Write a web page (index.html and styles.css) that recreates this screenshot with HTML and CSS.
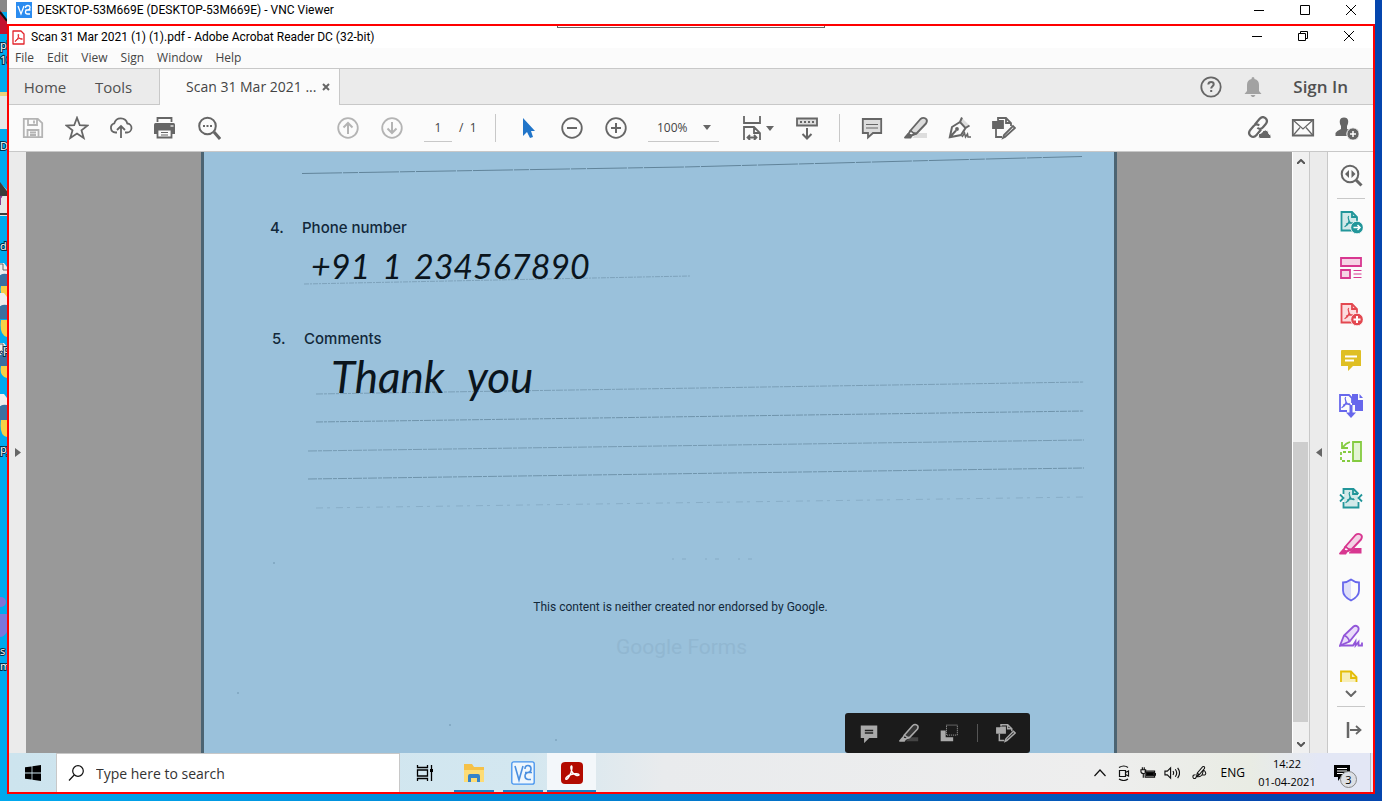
FILE: index.html
```html
<!DOCTYPE html>
<html lang="en">
<head>
<meta charset="utf-8">
<title>VNC Viewer - Acrobat Reader</title>
<link rel="stylesheet" href="styles.css">
</head>
<body>
<svg class="defs" width="0" height="0" aria-hidden="true">
  <defs>
    <g id="pdfmark" fill="none" stroke-width="1.3" stroke-linecap="round"><path d="M9.500 6.500c-1 .5.300 3 .5 4.500.5 1.500 2 2.500 4 2.500M10 11.500c-.5 2-2 4-4 5M7.500 14q2.500-1.700 6-1"/></g>
    <g id="edit-pdf" fill="none" stroke-width="1.800"><path d="M6 4V2h8l5 5v3M14 2v5h5M4 13v8h6"/><path d="M3 6h2l1-1h5v7H1V6z" class="solid"/><path d="M13 21l-2 1 1-3 9-9 2 2z"/></g>
    <g id="pen-hl" stroke-width="1.900" stroke-linejoin="round"><path d="M6.500 14.500L16.500 3q2.500-2 5-.5t.5 5L12.500 17.500q-3 .5-6-3z" class="body"/><path d="M6.500 14.500l-2 3.500 3 1.500 5-2" fill="none"/><path d="M1 21.500l3-3.500 3.500 1.500-1 2z" class="solid"/></g>
  </defs>
</svg>
<div class="desktop">
  <svg class="desk-icons" width="7" height="801" viewBox="0 0 7 801" aria-hidden="true">
    <path d="M0 0h7v12H0z" fill="#888"/><path d="M0 10l7 10v14H0z" fill="#c4122f"/><path d="M0 12l7 9" stroke="#111" stroke-width="2"/>
    <path d="M0 93h7v36H0z" fill="#e5e7e9"/><path d="M0 92h7v4H0z" fill="#ead27c"/>
    <path d="M0 183l7 7v26H0z" fill="#e6e6e6"/><path d="M0 182l7 9v5H0zM0 213h7v2H0z" fill="#3b3b3b"/><path d="M2 197q-2-1-2 2v6" stroke="#86408f" stroke-width="2" fill="none"/>
    <path d="M0 263h4l3 4v8H0z" fill="#eee"/><path d="M0 264h3v6h4" stroke="#666" fill="none"/><path d="M7 274q-7-1-7 3v9h7z" fill="#3b70a0"/><path d="M7 286H1q-2 10 6 12z" fill="#f6cf45"/>
    <path d="M0 343h4l3 4v8H0z" fill="#eee"/><path d="M0 344h3v6h4" stroke="#666" fill="none"/><path d="M7 354q-7-1-7 3v9h7z" fill="#3b70a0"/><path d="M7 366H1q-2 10 6 12z" fill="#f6cf45"/>
    <path d="M0 293h4l3 4v9H0z" fill="#eee"/><path d="M7 305q-7-1-7 3v11h7z" fill="#3b70a0"/><path d="M7 320H1q-2 15 6 17z" fill="#f6cf45"/>
    <path d="M0 394h4l3 4v8H0z" fill="#eee"/><path d="M7 405q-7-1-7 3v12h7z" fill="#3b70a0"/><path d="M7 420H1q-2 16 6 17z" fill="#f6cf45"/>
    <circle cx="1" cy="602" r="5" fill="#7d74d6"/><path d="M0 614h7v18q-3 5-7 5z" fill="#7a77dc"/>
    <g class="desk-label"><text x="0" y="49">pl</text><text x="0" y="64">10</text><text x="0" y="150">D</text><text x="0" y="250">di</text><text x="0" y="353">.p</text><text x="0" y="453">py</text><text x="0" y="655">s</text><text x="0" y="670">m</text></g>
  </svg>
  <div class="vnc">
    <header class="vnc-title">
      <svg class="app16" viewBox="0 0 16 16"><path d="M0 0h16v16H0z" fill="#2b8cf0"/><path d="M2 4l3 8 3-8M9.500 6q0-2.500 2.300-2.500T14 5.600 11.800 8H9.500M14.500 8h-3q-2 0-2 2t2 2h2.500" fill="none" stroke="#fff" stroke-width="1.300"/></svg>
      <h1>DESKTOP-53M669E (DESKTOP-53M669E) - VNC Viewer</h1>
      <div class="winbtns">
        <button aria-label="Minimize"><svg viewBox="0 0 10 10"><path d="M0 5.500h10"/></svg></button>
        <button aria-label="Maximize"><svg viewBox="0 0 10 10"><path d="M.5.5h9v9h-9z"/></svg></button>
        <button aria-label="Close"><svg viewBox="0 0 10 10"><path d="M0 0l10 10M10 0L0 10"/></svg></button>
      </div>
    </header>
    <main class="remote">
      <div class="vnc-handle"></div>
      <header class="app-title">
        <svg class="app-pdf" viewBox="0 0 13 15"><path d="M1 1h8l3 3v10H1z" fill="#fff" stroke="#e3242b" stroke-width="1.300" stroke-linejoin="round"/><path d="M6.400 4.200c-.9.300.1 3 .7 3.800 1 1.100 2.800 1.700 3.300 1.100.3-.8-2.800-.8-4.500-.2-2 .7-3.200 2.200-2.700 2.600.8.300 2.200-2.200 2.900-4 .4-1.200.9-3 .3-3.300z" fill="none" stroke="#e3242b"/></svg>
        <h2>Scan 31 Mar 2021 (1) (1).pdf - Adobe Acrobat Reader DC (32-bit)</h2>
        <div class="winbtns inner">
          <button aria-label="Minimize"><svg viewBox="0 0 10 10"><path d="M0 5.500h10"/></svg></button>
          <button aria-label="Restore"><svg viewBox="0 0 10 10"><path d="M.5 2.500h7v7h-7zM2.500 2V.5h7v7H8"/></svg></button>
          <button aria-label="Close"><svg viewBox="0 0 10 10"><path d="M0 0l10 10M10 0L0 10"/></svg></button>
        </div>
      </header>
      <nav class="menu"><button>File</button><button>Edit</button><button>View</button><button>Sign</button><button>Window</button><button>Help</button></nav>
      <div class="tabs">
        <button class="tab home">Home</button><button class="tab tools">Tools</button>
        <div class="tab active"><span>Scan 31 Mar 2021 ...</span><button aria-label="Close tab"><svg viewBox="0 0 8 8"><path d="M1 1l6 6M7 1L1 7" stroke="#666" stroke-width="2"/></svg></button></div>
        <div class="account">
          <button class="ic" aria-label="Help"><svg viewBox="0 0 24 24"><circle cx="12" cy="12" r="9.700"/><path d="M9.300 9.500q.2-2.500 2.800-2.500t2.600 2.200c0 2-2.500 2-2.500 4.300M12.200 15v2" stroke-width="2"/></svg></button>
          <button class="ic" aria-label="Notifications"><svg viewBox="0 0 24 24"><path fill="#a2a2a2" stroke="none" d="M12 2q1.500 0 1.500 2 4.500 1 4.500 6v6l2.500 3h-17L6 16v-6q0-5 4.500-6Q10.500 2 12 2zM9.500 20h5l-1.500 2h-2z"/></svg></button>
          <button class="signin">Sign In</button>
        </div>
      </div>
      <div class="toolbar">
        <div class="group">
          <button class="ic dim" aria-label="Save"><svg viewBox="0 0 24 24"><path d="M2.800 2.800h14l4.400 4.400v14H2.800zM7 3v6h9V3M6.500 21v-7h11v7M13 4.500v3M9 16.500h6M9 19h6"/></svg></button>
          <button class="ic" aria-label="Star"><svg viewBox="0 0 24 24"><path d="M12 1.800l2.800 7.400 7.900.3-6.200 4.900 2.200 7.600-6.700-4.400L5.300 22l2.200-7.600L1.300 9.500l7.900-.3z"/></svg></button>
          <button class="ic" aria-label="Upload"><svg viewBox="0 0 24 24"><path d="M8 16.500H6.500A4.700 4.700 0 0 1 5.300 7.300 6.700 6.700 0 0 1 18.300 7.500a4.500 4.500 0 0 1-.6 9H16M12 22V10.500M8 14l4-4 4 4"/></svg></button>
          <button class="ic" aria-label="Print"><svg viewBox="0 0 24 24"><path d="M4.500 6V2h14v4"/><path d="M2.500 7h18q1.500 0 1.500 1.500V18H1V8.500Q1 7 2.500 7z" fill="#666" stroke="none"/><path d="M4.500 13.500h14v8h-14z" fill="#fbfbfb"/><path d="M8 16.500h7M8 19h7" stroke-width="1.200"/><path d="M17.500 10h3" stroke="#fff" stroke-width="1.200"/></svg></button>
          <button class="ic" aria-label="Find"><svg viewBox="0 0 24 24"><circle cx="10.500" cy="10" r="8.300" stroke-width="2"/><path d="M17 16l6 7" stroke-width="3"/><path d="M6 10h2M9.500 10h2M13 10h2" stroke-width="2"/></svg></button>
        </div>
        <div class="group center">
          <button class="ic dim" aria-label="Previous page"><svg viewBox="0 0 24 24"><circle cx="12" cy="12" r="9.800"/><path d="M12 18V7M7.500 11.500L12 7l4.500 4.500" stroke-width="2"/></svg></button>
          <button class="ic dim" aria-label="Next page"><svg viewBox="0 0 24 24"><circle cx="12" cy="12" r="9.800"/><path d="M12 6v11M7.500 12.500L12 17l4.500-4.500" stroke-width="2"/></svg></button>
          <label class="pager"><input value="1" aria-label="Page"><span>/&nbsp; 1</span></label>
          <i class="vsep"></i>
          <button class="ic" aria-label="Select"><svg viewBox="0 0 24 24"><path d="M7 2v18l4-4 3 6 3-1-2-6h4z" fill="#2175c9" stroke="none"/></svg></button>
          <button class="ic" aria-label="Zoom out"><svg viewBox="0 0 24 24"><circle cx="12" cy="12" r="9.800"/><path d="M7 12h10" stroke-width="2"/></svg></button>
          <button class="ic" aria-label="Zoom in"><svg viewBox="0 0 24 24"><circle cx="12" cy="12" r="9.800"/><path d="M7 12h10M12 7v10" stroke-width="2"/></svg></button>
          <div class="zoom"><select aria-label="Zoom level"><option>100%</option></select><svg class="caret" viewBox="0 0 8 5"><path d="M0 0h8L4 5z"/></svg></div>
          <button class="ic fit" aria-label="Fit width"><svg viewBox="0 0 24 24"><path d="M3 0v7h16V0M3 24V11h10l6 6v7M13 11v6h6M6.500 21.500h9M9 19l-2.500 2.500L9 24M13 19l2.500 2.500L13 24"/></svg><svg class="caret" viewBox="0 0 8 5"><path d="M0 0h8L4 5z"/></svg></button>
          <button class="ic" aria-label="Scroll mode"><svg viewBox="0 0 24 24"><path d="M2 2.500h20v7H2z" fill="#ddd"/><path d="M5 6h14" stroke-dasharray="2 2" stroke-width="2"/><path d="M12 12v10M7.500 18l4.500 4.500 4.500-4.500" stroke-width="2"/></svg></button>
          <i class="vsep"></i>
          <button class="ic" aria-label="Comment"><svg viewBox="0 0 24 24"><path d="M2.800 3h18.400v14H13l-5 4.500V17H2.800z" fill="#ddd"/><path d="M6 8.500h12M6 12h12" stroke-width="1.200"/></svg></button>
          <button class="ic" aria-label="Highlight"><svg viewBox="0 0 24 24"><path d="M8 22l6-5h9v5z" fill="#ddd" stroke="none"/><use href="#pen-hl"/></svg></button>
          <button class="ic" aria-label="Sign document"><svg viewBox="0 0 24 24"><path d="M14 2l7 7-3 3-6-6z" fill="#ddd" stroke="none"/><path d="M1.800 21.200L4 11l8-5 5.500 6-4.500 7zM2 21l6-6.500M12 6l2-4.500M17.500 12l4-2.500" stroke-width="2"/><circle cx="9" cy="13" r="1"/><path d="M14 21l2.500-4 1 4 2-3 .5 3h3" stroke-width="1.500"/></svg></button>
          <button class="ic" aria-label="Edit PDF"><svg viewBox="0 0 24 24"><use href="#edit-pdf"/></svg></button>
        </div>
        <div class="group right">
          <button class="ic" aria-label="Share link"><svg viewBox="0 0 24 24"><g transform="rotate(-50 11 11)" stroke-width="2.200"><path d="M11 15H4q-4.500 0-4.500-4T4 7h5q4 0 4 4"/><path d="M11 7h7q4.500 0 4.500 4T18 15h-4q-4 0-4-4"/></g><path fill="#666" d="M13 22.500q-2.500-1-1.500-4 1-1.500 3-1.500 1-3 4-3t3.500 4q3 .5 2 4.500z" stroke="#fbfbfb" stroke-width="1"/></svg></button>
          <button class="ic" aria-label="Email"><svg viewBox="0 0 24 24"><path d="M1.800 4h20.400v15.500H1.800z"/><path d="M2 4l10 9 10-9M2 19.500l7-8M22 19.500l-7-8" stroke-width="1.200"/></svg></button>
          <button class="ic" aria-label="Share with people"><svg viewBox="0 0 24 24"><path fill="#666" d="M9 1.500c5 0 5 5 3 8.500v3l5 2v5H.5v-3q1-2 5.500-4v-3C4 6.500 4 1.500 9 1.500z" stroke="none"/><circle cx="18" cy="18" r="6.200" fill="#666" stroke="#fbfbfb" stroke-width="1"/><path d="M15 18h6M18 15v6" stroke="#fff" stroke-width="1.500"/></svg></button>
        </div>
      </div>
      <section class="work">
        <button class="pane-toggle" aria-label="Open navigation pane"><svg viewBox="0 0 6 9"><path d="M0 0v9l6-4.500z"/></svg></button>
        <div class="doc">
          <article class="paper">
            <svg class="rules" viewBox="0 0 910 601" preserveAspectRatio="none" aria-hidden="true">
              <g fill="none" stroke="#52748a" stroke-width="1">
                <path d="M98 21.500L480 15 878 4.500" opacity=".8" stroke-dasharray="40 1 15 1"/>
                <path d="M100 132l386-8" stroke-dasharray="5 1 2 1" opacity=".4"/>
                <path d="M112 242l768-12" stroke-dasharray="7 1 3 1" opacity=".45"/>
                <path d="M112 270l768-11" stroke-dasharray="7 1 3 1" opacity=".6"/>
                <path d="M104 299l776-11" stroke-dasharray="9 1 4 1" opacity=".5"/>
                <path d="M104 327l776-11" stroke-dasharray="9 1 4 1" opacity=".6"/>
                <path d="M112 356l768-11" stroke-dasharray="7 4 3 6" opacity=".25"/>
                <path d="M468 407h86" stroke-dasharray="2 8 4 19" opacity=".25"/>
              </g>
              <g fill="#6b91ab" opacity=".6"><circle cx="34" cy="541" r="1"/><circle cx="70" cy="411" r="1"/><circle cx="352" cy="588" r="1"/><circle cx="246" cy="573" r="1"/></g>
            </svg>
            <div class="question phone"><span class="num">4.</span><h3>Phone number</h3><p class="hand"><span>+91</span><span>1</span><span>234567890</span></p></div>
            <div class="question comments"><span class="num">5.</span><h3>Comments</h3><p class="hand"><span>Thank</span><span>you</span></p></div>
            <footer><p>This content is neither created nor endorsed by Google.</p><p class="forms">Google Forms</p></footer>
          </article>
          <div class="float">
            <button class="ic" aria-label="Add comment"><svg viewBox="0 0 24 24"><path d="M3 4h18v13h-9l-5 5v-5H3z" fill="#aaa"/><path d="M7 9h10M7 12h10" stroke="#222"/></svg></button>
            <button class="ic" aria-label="Highlight text"><svg viewBox="0 0 24 24"><path d="M8 22l6-5h9v5z" fill="#444" stroke="none"/><use href="#pen-hl"/></svg></button>
            <button class="ic" aria-label="Crop"><svg viewBox="0 0 24 24"><path d="M2 9h6v8h9v5H2z" fill="#aaa" stroke="none"/><path d="M9 2.500h13v12H9z" stroke-dasharray="1.200 1.200" stroke-width="1.200"/></svg></button>
            <i class="vsep"></i>
            <button class="ic" aria-label="Edit"><svg viewBox="0 0 24 24"><use href="#edit-pdf"/></svg></button>
          </div>
        </div>
        <div class="scroll"><svg viewBox="0 0 8 5"><path d="M0 5l4-4 4 4"/></svg><div class="track"><div class="thumb"></div></div><svg viewBox="0 0 8 5"><path d="M0 0l4 4 4-4"/></svg></div>
        <button class="pane-toggle end" aria-label="Collapse tools"><svg viewBox="0 0 6 9"><path d="M6 0v9L0 4.500z"/></svg></button>
        <aside class="rail">
          <button class="ic" aria-label="Search tools"><svg viewBox="0 0 24 24"><circle cx="11" cy="11" r="8.300" stroke-width="2"/><path d="M17 17l5.500 5.500" stroke-width="3"/><path class="solid" d="M10 7v8l-4-4zM12.500 7v8l4-4z" stroke="none"/></svg></button>
          <hr>
          <div class="tools-list">
            <button class="ic teal" aria-label="Export PDF"><svg viewBox="0 0 24 24"><path d="M2.500 2H13l5 5v13.500H2.500z" fill="#d2e9e9"/><path d="M13 2v5h5"/><use href="#pdfmark"/><circle cx="18" cy="17.500" r="6.300" fill="#22969a" stroke="#fbfbfb" stroke-width=".8"/><path d="M14.500 17.500H21M18.500 15l2.500 2.500-2.500 2.500" stroke="#fff" stroke-width="1.500"/></svg></button>
            <button class="ic pink" aria-label="Organize pages"><svg viewBox="0 0 24 24"><path d="M2 2h20v8H2zM2 14h9v8H2z" fill="#f6d3e5"/><path d="M14.500 14.500h8M14.500 18h8M14.500 21.500h8" stroke-width="1"/></svg></button>
            <button class="ic red" aria-label="Create PDF"><svg viewBox="0 0 24 24"><path d="M2.500 2H13l5 5v13.500H2.500z" fill="#fbdcde"/><path d="M13 2v5h5"/><use href="#pdfmark"/><circle cx="18" cy="17.500" r="6.300" fill="#e34850" stroke="#fbfbfb" stroke-width=".8"/><path d="M14.500 17.500h7M18 14v7" stroke="#fff" stroke-width="2"/></svg></button>
            <button class="ic" aria-label="Comment tool"><svg viewBox="0 0 24 24"><path d="M3 2h18q1 0 1 1v15H14l-5 5v-5H2V3q0-1 1-1z" fill="#dfbf24" stroke="none"/><path d="M6 8.500h12M6 12.500h9" stroke="#fff"/></svg></button>
            <button class="ic indigo" aria-label="Combine files"><svg viewBox="0 0 24 24"><path d="M8 17H1V1h9l3 3v5"/><use href="#pdfmark" x="-3" y="-3"/><path class="solid" d="M13 0h6v6h5v11h-8v-6h-3zM20.500 0L24 4h-3.500z" stroke="none"/><path d="M12 11v9" stroke-width="3"/><path class="solid" d="M7 18.500h10l-5 5.500z" stroke="none"/></svg></button>
            <button class="ic green" aria-label="Compress pages"><svg viewBox="0 0 24 24"><path d="M14 2h8v19h-8z" fill="#e3f4d3"/><path d="M12 12H2v9h11" stroke-dasharray="3 2"/><path d="M11 2q-4 1-7 5M3 2v6h6"/></svg></button>
            <button class="ic teal" aria-label="Optimize PDF"><svg viewBox="0 0 24 24"><path d="M4.500 8V3h10l5 5M4.500 16v5.500h15V16" fill="#d2e9e9"/><path d="M5 8h14v8H5z" fill="#d2e9e9" stroke="none"/><path d="M14 3v5h5"/><use href="#pdfmark" x="1"/><path d="M1 8.500L4.500 12 1 15.500M23 8.500L19.500 12l3.500 3.500"/></svg></button>
            <button class="ic pink" aria-label="Redact"><svg viewBox="0 0 24 24"><path class="solid" d="M10 20.500l5-4.500h7.500v5.500H10z" stroke="none"/><use href="#pen-hl"/></svg></button>
            <button class="ic indigo" aria-label="Protect"><svg viewBox="0 0 24 24"><path d="M12 1.500Q8 4.500 4 4.500v8q0 6 8 10z" fill="#dedef9" stroke="none"/><path d="M12 1.500Q8 4.500 4 4.500v8q0 6 8 10 8-4 8-10v-8q-4 0-8-3z"/></svg></button>
            <button class="ic purple" aria-label="Fill and sign"><svg viewBox="0 0 24 24"><path d="M1 21.500L5 11.500 14.500 2.500q2-1.500 4 0t.5 4.500L10.500 17.500z" fill="#eadcfa"/><path d="M5 11.500q4 1 5.500 6M1 21.500h13l2.500-4v4l3-3.500v3.500h3.500v-3"/></svg></button>
            <button class="ic cut yellow" aria-label="More tools"><svg viewBox="0 0 24 24"><path d="M2 1.500h10l5.500 5.500v16H2z" fill="#f7eeb8"/><path d="M12 1.500V8h6"/></svg></button>
          </div>
          <svg class="more" viewBox="0 0 12 7"><path d="M1 1l5 5 5-5"/></svg>
          <hr>
          <button class="ic" aria-label="Hide tools"><svg viewBox="0 0 24 24"><path d="M9 4v16" stroke-width="2.500"/><path d="M11 12h10M17 8l4.500 4-4.500 4"/></svg></button>
        </aside>
      </section>
      <footer class="taskbar">
        <button class="start" aria-label="Start"><svg viewBox="0 0 16 16"><path d="M0 2.300L6.600 1.400v6.200H0zM7.400 1.300L16 0v7.600H7.400zM0 8.400h6.600v6.200L0 13.700zM7.400 8.400H16V16l-8.600-1.300z"/></svg></button>
        <label class="search"><svg viewBox="0 0 16 16"><circle cx="10" cy="6" r="5.300"/><path d="M6.200 10L1 15.500"/></svg><input placeholder="Type here to search" aria-label="Search"></label>
        <button class="task" aria-label="Task view"><svg class="tv" viewBox="0 0 18 16"><path d="M1.500 0v2.500h10V0M1.500 5h10v6h-10zM1.500 16v-2.500h10V16M15.500 0v16"/><path d="M14 4h3v3h-3z" fill="#000" stroke="none"/></svg></button>
        <button class="task open" aria-label="File Explorer"><svg viewBox="0 0 24 24"><path d="M2 3h8l2 3h10v15H2z" fill="#f5c148"/><path d="M2 9h20v12H2z" fill="#fddc75"/><path d="M6 21v-6q0-2 2-2h8q2 0 2 2v6h-3v-4H9v4z" fill="#3583c8"/></svg></button>
        <button class="task open" aria-label="VNC Viewer"><svg viewBox="0 0 24 24"><rect x=".8" y=".8" width="22.400" height="22.400" rx="2" fill="#eef6fd" stroke="#4292ee" stroke-width="1.300"/><path d="M4 5l4 14 4-14M14 8q0-3.500 3-3.500t3 3.300-3 3.700h-3M21 11.500h-3.500Q14 12 14 15t3 3.500h3" fill="none" stroke="#4a8fe0" stroke-width="1.600"/></svg></button>
        <button class="task open current" aria-label="Acrobat Reader"><svg viewBox="0 0 24 24"><rect x="1" y="1" width="22" height="22" rx="4" fill="#b30b00"/><path d="M11.500 5c-1.500.5 0 5 1 6.500 1.500 2 5 4 6.500 2.500.5-1.500-4.500-1.700-8-.5-3 1-6 3.500-5.200 4.700 1.200 1 3.700-2.700 5-6.200 1-3 1.700-6.500.7-7z" fill="none" stroke="#fff" stroke-width="1.400"/></svg></button>
        <div class="tray">
          <svg viewBox="0 0 16 16"><path d="M2.500 11L8 5l5.500 6"/></svg>
          <svg viewBox="0 0 16 16"><path d="M3.500 5.500h6v6h-6zM9.500 7.500l3-1.500v5l-3-1.500M3 2.500q5-3 9 0M3 14q5 3 9 0"/></svg>
          <svg viewBox="0 0 17 16"><path d="M5.500 6h10v6.500h-10zM16.500 8v3M1 4.500h5v2q0 2-2.500 2T1 6.500zM2.500 4V2M4.500 4V2M3.500 8v5"/><path d="M7 7.500h7.500V11H7z" fill="#000"/></svg>
          <svg viewBox="0 0 17 16"><path d="M1 6v4h2.500L7 13.500v-11L3.500 6zM9.500 6q1.500 2 0 4M12 4q3 4 0 8M14.500 2.500q4 5.500 0 11"/></svg>
          <svg class="pen" viewBox="0 0 18 16"><path d="M5 12l1-4 6-7q3-1 2 2l-6 7zM5 12q6 1 7-4t3-1-4 3M6 8l2 2M5 12l-1 2q-3 1-3-2 0-2 3-2"/></svg>
          <span class="lang">ENG</span>
          <time class="clock"><span>14:22</span><span>01-04-2021</span></time>
          <button class="notif" aria-label="3 notifications"><svg viewBox="0 0 16 16"><path d="M0 0h16v12H7l-3 4v-4H0z"/><path d="M3 3.500h10M3 6h10M3 8.500h7" stroke="#fff"/></svg><b>3</b></button>
        </div>
      </footer>
    </main>
  </div>
</div>
</body>
</html>
```

FILE: styles.css
```css
* { box-sizing: border-box; }
body { margin: 0; background: #fff; font: 12px/16px "Open Sans", "Noto Sans", sans-serif; color: #000; }
h1, h2, h3, p { margin: 0; font-size: inherit; font-weight: inherit; }
button { font: inherit; color: inherit; background: none; border: 0; padding: 0; display: flex; align-items: center; justify-content: center; }
svg { display: block; flex: none; }
.defs { position: absolute; }

.desktop { position: relative; height: calc(100vh - 6px); min-height: 600px; padding: 0 7px 7px; overflow: hidden; background: linear-gradient(90deg, #00a9ee, #007fd0 45%, #0546ae 92%); }
.desk-icons { position: absolute; left: 0; top: 0; }
.desk-label { font-size: 11px; fill: #fff; stroke: #053048; stroke-width: 2px; paint-order: stroke; }
.vnc { height: 100%; display: flex; flex-direction: column; }
.vnc-title { display: flex; align-items: center; height: 24px; padding: 0 1px 4px 9px; gap: 5px; background: #fff; }
.vnc-title h1, .app-title h2 { font-family: Roboto, sans-serif; }
.app16 { width: 16px; height: 16px; }
.winbtns { display: flex; margin-left: auto; }
.winbtns button { width: 46px; height: 20px; }
.winbtns svg { width: 10px; height: 10px; fill: none; stroke: #000; }

.remote { position: relative; flex: 1; min-height: 0; border: 2px solid #f00; display: flex; flex-direction: column; background: #fbfbfb; }
.vnc-handle { position: absolute; top: 0; left: 50%; width: 268px; height: 2px; margin-left: -134px; border: 1px solid #666; border-top: 0; background: #fff; }
.app-title { height: 22px; display: flex; align-items: center; gap: 6px; padding: 0 1px 0 3px; background: #fff; }
.app-pdf { width: 13px; height: 15px; }
.winbtns.inner svg { margin-bottom: 2px; }
.menu { height: 20px; display: flex; align-items: center; gap: 13px; padding-left: 6px; color: #444; }
.tabs { height: 37px; display: flex; border: solid #c8c8c8; border-width: 1px 0; background: #ebebeb; font-size: 15px; color: #505050; }
.tab.home { width: 72px; }
.tab.tools { width: 65px; margin-right: 13px; }
.tab.active { width: 181px; display: flex; align-items: center; justify-content: space-between; padding: 0 9px 0 26px; border: solid #c8c8c8; border-width: 0 1px; background: #fbfbfb; font-size: 14px; margin-bottom: -1px; color: #444; }
.tab.active svg { width: 8px; height: 8px; }
.account { margin-left: auto; display: flex; align-items: center; padding-right: 25px; gap: 18px; }
.signin { font-size: 17px; font-weight: 600; margin-left: 10px; color: #505050; }

.ic { width: 24px; height: 24px; flex: none; color: #666; }
.ic svg { width: 24px; height: 24px; fill: none; stroke: currentColor; stroke-width: 1.8; }
.ic.dim { color: #b4b4b4; }
.ic.teal { color: #22969a; }
.ic.pink { color: #d83790; }
.ic.red { color: #e34850; }
.ic.indigo { color: #6767ec; }
.ic.green { color: #84cb40; }
.ic.purple { color: #9256d9; }
.ic.yellow { color: #e4bd08; }
.solid { fill: currentColor; }
.body { fill: currentColor; fill-opacity: .2; }
.toolbar { height: 47px; display: flex; align-items: center; padding: 0 14px 0 12px; border-bottom: 1px solid #c8c8c8; }
.group { display: flex; align-items: center; gap: 20px; }
.group.center { margin-left: 115px; }
.group.right { margin-left: auto; }
.vsep { width: 1px; height: 28px; background: #c8c8c8; }
.pager { display: flex; align-items: center; width: 51px; gap: 7px; height: 28px; color: #444; white-space: nowrap; }
.pager input { width: 28px; height: 28px; border: 0; border-bottom: 1px solid #c8c8c8; background: none; font: inherit; color: inherit; text-align: center; padding: 0; }
.zoom { width: 71px; height: 28px; display: flex; align-items: center; border-bottom: 1px solid #c8c8c8; padding: 0 8px 0 9px; }
.zoom select { appearance: none; flex: 1; min-width: 0; border: 0; padding: 0; background: none; font: inherit; color: #444; }
svg.caret, .ic svg.caret { width: 8px; height: 5px; fill: #666; stroke: none; }
.ic.fit { width: 36px; gap: 1px; }

.work { flex: 1; min-height: 0; display: flex; }
.pane-toggle { width: 17px; background: #ebebeb; flex: none; }
.pane-toggle svg { width: 6px; height: 9px; fill: #666; }
.pane-toggle.end { width: 19px; border: solid #c8c8c8; border-width: 0 1px; }
.doc { position: relative; flex: 1; min-width: 0; background: #999; overflow: hidden; display: flex; justify-content: center; }
.paper { position: relative; width: 916px; max-width: 100%; background: #9ac1db; border: solid #4c6472; border-width: 0 3px; color: #12283a; }
.rules { position: absolute; left: 0; top: 0; width: 100%; height: 601px; }
.question { position: relative; display: grid; grid-template-columns: 32px 1fr; font: 500 15px/20px Inter, sans-serif; }
.phone { padding: 66px 0 0 66px; }
.comments { padding: 32px 0 0 68px; }
.hand { grid-column: 2; display: flex; font: italic 400 34px/40px Lato, sans-serif; color: #0b151d; }
.phone .hand { padding: 8px 0 0 9px; gap: 12px; height: 59px; }
.comments .hand { padding: 5px 0 0 27px; gap: 22px; font-size: 44px; line-height: 44px; }
.paper footer { position: relative; text-align: center; font: 12px/16px Roboto, sans-serif; margin-top: 201px; padding-left: 43px; }
.paper .forms { font-size: 21px; line-height: 24px; color: #91b7d1; margin-top: 20px; padding-left: 2px; }
.float { position: absolute; right: 262px; bottom: 0; width: 185px; height: 40px; border-radius: 3px; background: #1b1b1b; display: flex; align-items: center; justify-content: space-between; padding: 0 12px; }
.float .ic { color: #aaa; }
.float .ic svg { width: 20px; height: 20px; }
.float .vsep { height: 18px; background: #555; }

.scroll { width: 17px; border-left: 1px solid #fff; background: #f0f0f0; display: flex; flex-direction: column; align-items: center; padding: 7px 0 6px; gap: 9px; }
.scroll svg { width: 8px; height: 5px; fill: none; stroke: #555; stroke-width: 2; }
.track { flex: 1; width: 15px; align-self: flex-start; display: flex; align-items: flex-end; padding-bottom: 11px; }
.thumb { width: 15px; height: 51%; background: #cdcdcd; }
.rail { width: 45px; flex: none; display: flex; flex-direction: column; align-items: center; padding: 11px 0; }
.rail hr { width: 28px; height: 1px; border: 0; margin: 11px 0; background: #c8c8c8; }
.tools-list { display: flex; flex-direction: column; gap: 22px; flex: 1; min-height: 0; overflow: hidden; }
.cut { height: 12px; overflow: hidden; align-items: flex-start; }
.rail .more { width: 12px; height: 7px; fill: none; stroke: #666; stroke-width: 2; margin-top: 8px; }
.rail .more + hr { margin: 9px 0 11px; }

.taskbar { height: 39px; flex: none; display: flex; background: linear-gradient(90deg, #cde4ee, #d3e7f0 38%, #e9ebed 48%, #eee 80%, #e9ece4 91%, #e3e7f5 96%); }
.start { width: 47px; }
.start svg { width: 16px; height: 16px; }
.search { flex: 0 1 344px; display: flex; align-items: center; gap: 12px; padding-left: 11px; background: #fff; border: 1px solid #c8c8c8; border-bottom: 0; }
.search svg { width: 16px; height: 16px; fill: none; stroke: #111; stroke-width: 1.2; }
.search input { flex: 1; min-width: 0; border: 0; padding: 1px 0 0; background: none; font: 14px/20px "Open Sans", sans-serif; }
.search input::placeholder { color: #333; opacity: 1; }
.task { width: 49px; }
.task svg { width: 24px; height: 24px; }
.task .tv { width: 18px; height: 16px; fill: none; stroke: #000; stroke-width: 1.3; }
.task.open { background: linear-gradient(#1b7ac4, #1b7ac4) bottom / 40px 2px no-repeat; }
.task.current { background-color: #f3f7fa; background-size: 100% 2px; }
.tray { margin-left: auto; display: flex; align-items: center; gap: 8px; padding-right: 2px; }
.tray > svg { width: 16px; height: 16px; fill: none; stroke: #111; stroke-width: 1.2; }
.tray .pen { margin-left: 4px; }
.lang { margin-left: 5px; }
.clock { display: flex; flex-direction: column; align-items: center; font-size: 11px; line-height: 18px; margin-left: 2px; width: 64px; }
.notif { position: relative; width: 48px; height: 39px; margin-left: -4px; padding-right: 10px; border-right: 1px solid #b5bcc8; }
.notif svg { width: 16px; height: 16px; }
.notif b { position: absolute; left: 17px; top: 18px; width: 17px; height: 17px; border: 1px solid #888; border-radius: 50%; background: #dcdfe5; font-weight: 400; font-size: 11px; line-height: 15px; }
```
